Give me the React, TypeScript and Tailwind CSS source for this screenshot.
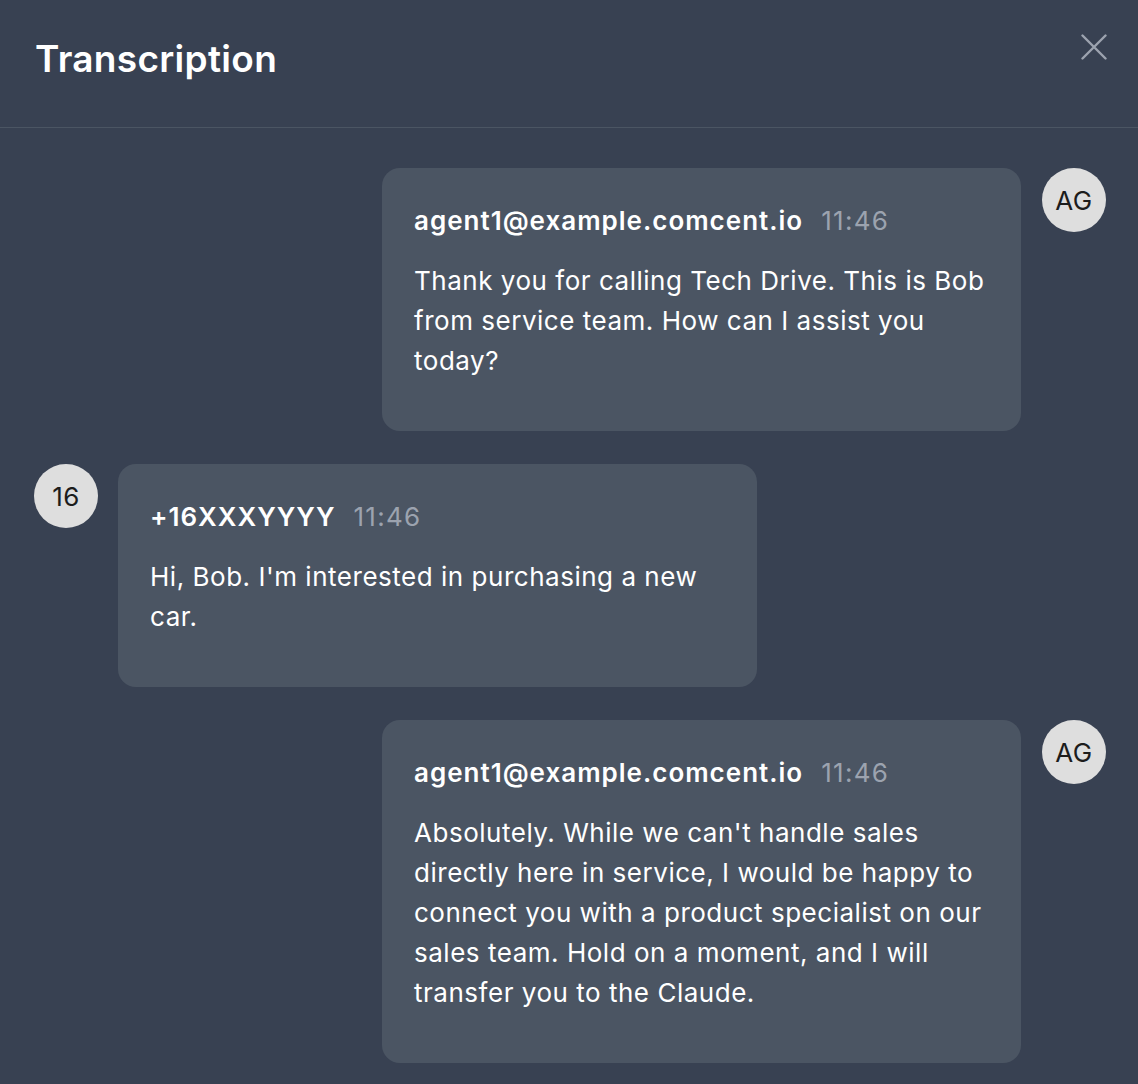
import React from "react";

type Msg = { side: "left" | "right"; avatar: string; name: string; time: string; text: string };

const messages: Msg[] = [
  {
    side: "right",
    avatar: "AG",
    name: "agent1@example.comcent.io",
    time: "11:46",
    text: "Thank you for calling Tech Drive. This is Bob from service team. How can I assist you today?",
  },
  {
    side: "left",
    avatar: "16",
    name: "+16XXXYYYY",
    time: "11:46",
    text: "Hi, Bob. I'm interested in purchasing a new car.",
  },
  {
    side: "right",
    avatar: "AG",
    name: "agent1@example.comcent.io",
    time: "11:46",
    text: "Absolutely. While we can't handle sales directly here in service, I would be happy to connect you with a product specialist on our sales team. Hold on a moment, and I will transfer you to the Claude.",
  },
];

function Avatar({ label }: { label: string }) {
  return (
    <div className="w-16 h-16 shrink-0 rounded-full bg-[#dedede] text-[#1c1c1c] flex items-center justify-center text-[26px] tracking-[0.5px]">
      {label}
    </div>
  );
}

function Bubble({ m }: { m: Msg }) {
  return (
    <div className="w-[639px] bg-[#4b5563] rounded-[18px] px-8 pt-[33px] pb-[50px]">
      <div className="flex items-baseline gap-[18px] leading-[40px]">
        <span className="text-[26px] font-semibold text-white tracking-[1px]">{m.name}</span>
        <span className="text-[26px] text-[#9ca3af] tracking-[1.3px]">{m.time}</span>
      </div>
      <p className="mt-5 text-[26px] leading-[40px] text-white tracking-[0.52px]">{m.text}</p>
    </div>
  );
}

export default function App() {
  return (
    <div
      className="w-[1138px] min-h-[1084px] bg-[#384152] text-white overflow-hidden"
      style={{ fontFamily: "Inter, 'Noto Sans', sans-serif" }}
    >
      <div className="h-[128px] border-b border-[#4b5563] flex items-start justify-between pl-[35px] pr-[31px]">
        <h1 className="mt-[36px] text-[37px] leading-[46px] font-semibold text-white tracking-[0.3px]">Transcription</h1>
        <button className="mt-[34px] text-[#9ca3af]">
          <svg width="26" height="26" viewBox="0 0 26 26" fill="none" stroke="currentColor" strokeWidth="2.4" strokeLinecap="round">
            <path d="M1.5 1.5 L24.5 24.5 M24.5 1.5 L1.5 24.5" />
          </svg>
        </button>
      </div>
      <div className="flex flex-col gap-[33px] pt-10 px-8">
        {messages.map((m, i) =>
          m.side === "right" ? (
            <div key={i} className="flex justify-end items-start gap-[21px]">
              <Bubble m={m} />
              <Avatar label={m.avatar} />
            </div>
          ) : (
            <div key={i} className="flex justify-start items-start gap-[20px] pl-[2px]">
              <Avatar label={m.avatar} />
              <Bubble m={m} />
            </div>
          )
        )}
      </div>
    </div>
  );
}
